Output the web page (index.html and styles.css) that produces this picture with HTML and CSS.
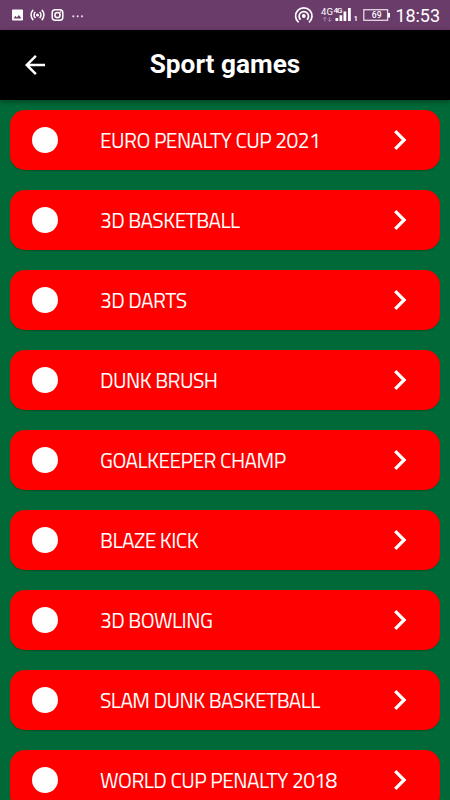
FILE: index.html
```html
<!DOCTYPE html>
<html lang="en">
<head>
    <meta charset="UTF-8">
    <meta name="viewport" content="width=device-width, initial-scale=1.0">
    <title>Sport games</title>
    <link rel="stylesheet" href="styles.css">
</head>
<body>
    <svg class="defs" width="0" height="0">
        <symbol id="chevron" viewBox="8.59 6 7.41 12"><path d="M10 6L8.59 7.41 13.17 12l-4.58 4.59L10 18l6-6z"/></symbol>
    </svg>

    <div class="status-bar">
        <svg class="status-left" width="90" height="30" viewBox="0 0 90 30">
            <path fill="#fff" fill-rule="evenodd" d="M13 9.5h9a1 1 0 0 1 1 1v9a1 1 0 0 1-1 1h-9a1 1 0 0 1-1-1v-9a1 1 0 0 1 1-1zM13.5 18.5h8l-2.6-3.6-2 2.5-1.4-1.6z"/>
            <g fill="none" stroke="#fff" stroke-width="1.5">
                <path d="M33.2 9.9a7.2 7.2 0 0 0 0 10.2M35.4 12a4 4 0 0 0 0 6M41.8 9.9a7.2 7.2 0 0 1 0 10.2M39.6 12a4 4 0 0 1 0 6"/>
                <rect x="52.2" y="9.7" width="10.6" height="10.6" rx="3"/>
                <circle cx="57.5" cy="15" r="2.6"/>
            </g>
            <circle cx="37.5" cy="15" r="1.5" fill="#fff"/>
            <circle cx="60.5" cy="12" r=".8" fill="#fff"/>
            <g fill="#e4d9e4"><circle cx="73.3" cy="16.3" r="1.1"/><circle cx="77.7" cy="16.3" r="1.1"/><circle cx="82" cy="16.3" r="1.1"/></g>
        </svg>
        <svg class="status-right" width="160" height="30" viewBox="290 0 160 30">
            <path d="M298.6 22.4a8.2 8.2 0 1 1 10.4 0M300.6 19.7a4.7 4.7 0 1 1 6.4 0" fill="none" stroke="#fff" stroke-width="1.7"/>
            <circle cx="303.8" cy="16" r="1.9" fill="#fff"/>
            <text x="321" y="14.5" class="net" textLength="12">4G</text>
            <text x="333.5" y="12.8" class="net net-small" textLength="9">4G</text>
            <path d="M324.8 21.5v-4M323.2 19l1.6-1.8 1.6 1.8M329.6 17v4M328 19.7l1.6 1.8 1.6-1.8" fill="none" stroke="#a484a4"/>
            <path d="M335.5 18h2.7v3h-2.7zM339.5 15.3h2.7V21h-2.7zM343.5 11.5h2.8V21h-2.8zM348 8h2.8v13H348z" fill="#fff"/>
            <text x="353.7" y="21" class="sim">1</text>
            <rect x="363.8" y="9.7" width="23.8" height="10.6" fill="none" stroke="#e4d9e4" stroke-width="1.3"/>
            <path d="M388 13h2v4.5h-2z" fill="#fff"/>
            <text x="376.7" y="18.4" class="battery" textLength="10" text-anchor="middle">69</text>
            <text x="395.5" y="22" class="clock" textLength="44.5">18:53</text>
        </svg>
    </div>

    <div class="app-bar">
        <svg class="back" width="20" height="20" viewBox="4 4 16 16"><path d="M20 11H7.83l5.59-5.59L12 4l-8 8 8 8 1.41-1.41L7.83 13H20z"/></svg>
        <h1 class="title">Sport games</h1>
    </div>

    <div class="list">
        <div class="card">
            <span class="dot"></span>
            <span class="label">EURO PENALTY CUP 2021</span>
            <svg class="chevron"><use href="#chevron"/></svg>
        </div>
        <div class="card">
            <span class="dot"></span>
            <span class="label">3D BASKETBALL</span>
            <svg class="chevron"><use href="#chevron"/></svg>
        </div>
        <div class="card">
            <span class="dot"></span>
            <span class="label">3D DARTS</span>
            <svg class="chevron"><use href="#chevron"/></svg>
        </div>
        <div class="card">
            <span class="dot"></span>
            <span class="label">DUNK BRUSH</span>
            <svg class="chevron"><use href="#chevron"/></svg>
        </div>
        <div class="card">
            <span class="dot"></span>
            <span class="label">GOALKEEPER CHAMP</span>
            <svg class="chevron"><use href="#chevron"/></svg>
        </div>
        <div class="card">
            <span class="dot"></span>
            <span class="label">BLAZE KICK</span>
            <svg class="chevron"><use href="#chevron"/></svg>
        </div>
        <div class="card">
            <span class="dot"></span>
            <span class="label">3D BOWLING</span>
            <svg class="chevron"><use href="#chevron"/></svg>
        </div>
        <div class="card">
            <span class="dot"></span>
            <span class="label">SLAM DUNK BASKETBALL</span>
            <svg class="chevron"><use href="#chevron"/></svg>
        </div>
        <div class="card">
            <span class="dot"></span>
            <span class="label">WORLD CUP PENALTY 2018</span>
            <svg class="chevron"><use href="#chevron"/></svg>
        </div>
    </div>
</body>
</html>
```
FILE: styles.css
```css
* { box-sizing: border-box; }
body {
    margin: 0;
    height: 800px;
    overflow: hidden;
    display: flex;
    flex-direction: column;
    background-color: #006937;
    font-family: Roboto, sans-serif;
    color: #fff;
}
.defs { flex: none; }

/* status bar */
.status-bar { display: flex; flex: none; justify-content: space-between; height: 30px; background-color: #6a3c69; }
.status-bar text { fill: #fff; }
.net { font-size: 9.5px; }
.net-small { font-size: 8px; font-weight: 500; }
.sim { font-size: 7px; font-weight: 700; }
.battery { font-size: 8.5px; font-weight: 500; }
.clock { font-size: 18px; }

.app-bar {
    display: flex;
    flex: none;
    align-items: center;
    height: 70px;
    padding: 0 25px;
    background-color: #000;
    box-shadow: 0 2px 5px rgba(0, 0, 0, 0.35);
}
.back { fill: #fff; }
.title { flex: 1; margin: 0 20px 0 0; text-align: center; font-size: 26.2px; font-weight: 700; line-height: 68px; height: 70px; }

/* games list */
.list { display: flex; flex-direction: column; gap: 20px; padding: 10px; }
.card {
    display: flex;
    flex: none;
    align-items: center;
    height: 60px;
    padding: 0 33.5px 0 22px;
    border-radius: 15px;
    background-color: #f00;
    box-shadow: 0 1px 1px rgba(0, 0, 0, 0.2);
}
.dot { width: 26px; height: 26px; border-radius: 50%; background-color: #fff; }
.label { margin-left: 42px; font-family: "Titillium Web", "Open Sans", sans-serif; font-size: 21px; letter-spacing: -0.53px; line-height: 30px; white-space: nowrap; }
.chevron { width: 12.5px; height: 20px; margin-left: auto; fill: #fff; }
```
